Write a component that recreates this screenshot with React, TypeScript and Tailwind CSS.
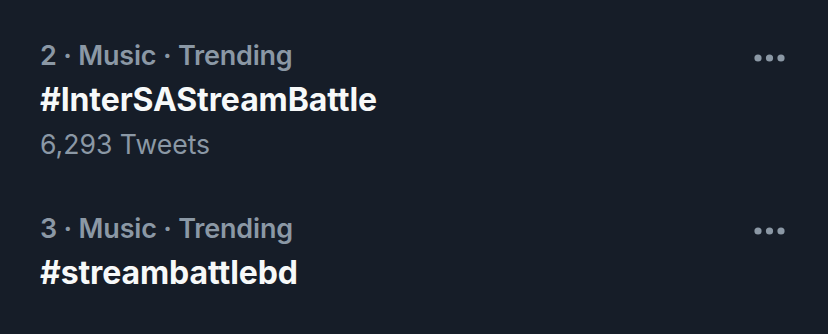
import React from "react";

const items = [
  { meta: "2 · Music · Trending", tag: "#InterSAStreamBattle", count: "6,293 Tweets" },
  { meta: "3 · Music · Trending", tag: "#streambattlebd", count: null as string | null },
];

function Dots() {
  return (
    <svg width="32" height="10" viewBox="0 0 32 10" className="text-[#8b98a5]">
      <circle cx="4" cy="5" r="3.6" fill="currentColor" />
      <circle cx="15.5" cy="5" r="3.6" fill="currentColor" />
      <circle cx="27" cy="5" r="3.6" fill="currentColor" />
    </svg>
  );
}

export default function App() {
  return (
    <div
      className="w-[828px] h-[334px] bg-[#161d28] flex flex-col gap-[41px] pt-[34px] pl-[40px] pr-[42px]"
      style={{ fontFamily: "Inter, 'Liberation Sans', sans-serif" }}
    >
      {items.map((it) => (
        <div key={it.tag} className="flex justify-between items-start">
          <div className="flex flex-col">
            <div className="text-[27px] leading-[44px] font-semibold text-[#8b98a5] tracking-[-0.2px]">
              {it.meta}
            </div>
            <div className="text-[32px] leading-[44px] font-bold text-[#f7f9f9] tracking-[-0.1px]">
              {it.tag}
            </div>
            {it.count && (
              <div className="text-[26.6px] leading-[44px] font-normal text-[#8b98a5]">
                {it.count}
              </div>
            )}
          </div>
          <div className="pt-[19px]">
            <Dots />
          </div>
        </div>
      ))}
    </div>
  );
}
